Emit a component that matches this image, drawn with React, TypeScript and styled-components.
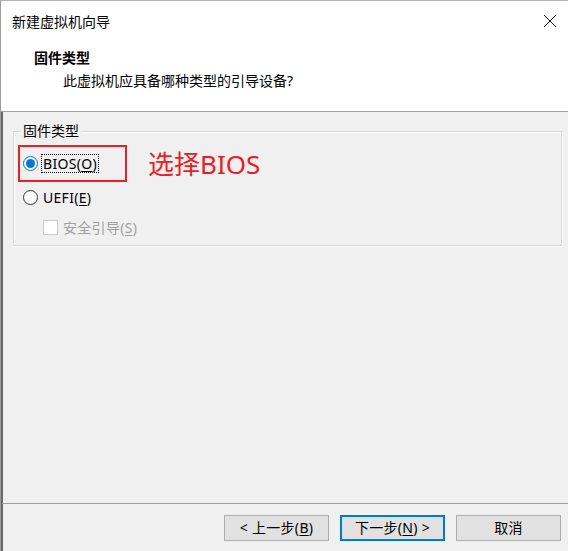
import React from "react";
import styled, { createGlobalStyle } from "styled-components";

const Global = createGlobalStyle`
  html, body { margin: 0; padding: 0; background: #f0f0f0; }
  body { font-family: "Noto Sans", "Noto Sans CJK SC", sans-serif; }
`;

const FONT = `"Noto Sans", "Noto Sans CJK SC", sans-serif`;

const Window = styled.div`
  width: 568px;
  height: 551px;
  box-sizing: border-box;
  display: flex;
  flex-direction: column;
  border-left: 1px solid #9c9c9c;
  border-top: 1px solid #b4b4b4;
  font-family: ${FONT};
  font-size: 14px;
  color: #000;
  background: #f0f0f0;
  overflow: hidden;
`;

const Header = styled.div`
  height: 110px;
  background: #fff;
  border-bottom: 1px solid #a0a0a0;
  display: flex;
  flex-direction: column;
  flex-shrink: 0;
`;

const TitleBar = styled.div`
  height: 38px;
  display: flex;
  align-items: center;
  justify-content: space-between;
  padding: 0 11px 0 11px;
  box-sizing: border-box;
`;

const TitleText = styled.span`
  font-size: 14px;
  line-height: 20px;
  margin-top: 4px;
`;

const CloseBtn = styled.span`
  display: flex;
  width: 14px;
  height: 14px;
  margin-top: 2px;
`;

const HeadTitle = styled.div`
  font-weight: bold;
  font-size: 14px;
  line-height: 20px;
  padding-left: 33px;
  margin-top: 9px;
`;

const HeadSub = styled.div`
  font-size: 14px;
  line-height: 20px;
  padding-left: 62px;
  margin-top: 3px;
`;

const Body = styled.div`
  flex: 1;
  border-left: 2px solid #6a6a6a;
  padding: 19px 6px 0 10px;
  box-sizing: border-box;
`;

const GroupBox = styled.div`
  position: relative;
  border: 1px solid #d9d9d9;
  box-shadow: inset 1px 1px 0 #fff, 1px 1px 0 #fff;
  padding: 13px 0 8px 4px;
`;

const Legend = styled.span`
  position: absolute;
  top: -11px;
  left: 7px;
  padding: 0 2px;
  background: #f0f0f0;
  line-height: 20px;
`;

const AnnotRow = styled.div`
  display: flex;
  align-items: center;
`;

const AnnotBox = styled.div`
  width: 109px;
  height: 37px;
  box-sizing: border-box;
  border: 2px solid #e8202a;
  display: flex;
  align-items: center;
  padding-left: 3px;
`;

const AnnotText = styled.span`
  font-size: 26px;
  line-height: 34px;
  color: #ec1c24;
  margin-left: 21px;
  margin-top: 1px;
`;

const OptionRow = styled.div<{ $indent?: number }>`
  display: flex;
  align-items: center;
  height: 20px;
  margin-top: ${(p) => (p.$indent ? 10 : 5)}px;
  padding-left: ${(p) => 5 + (p.$indent || 0)}px;
`;

const Radio = styled.span<{ $checked?: boolean }>`
  width: 15px;
  height: 15px;
  box-sizing: border-box;
  border-radius: 50%;
  border: 1px solid ${(p) => (p.$checked ? "#0078d7" : "#333")};
  background: #fff;
  display: flex;
  align-items: center;
  justify-content: center;
  flex-shrink: 0;
  &::after {
    content: "";
    display: ${(p) => (p.$checked ? "block" : "none")};
    width: 9px;
    height: 9px;
    border-radius: 50%;
    background: #0078d7;
  }
`;

const Checkbox = styled.span`
  width: 15px;
  height: 15px;
  box-sizing: border-box;
  border: 1px solid #cccccc;
  background: #fff;
  flex-shrink: 0;
`;

const Label = styled.span<{ $disabled?: boolean; $focus?: boolean }>`
  margin-left: ${(p) => (p.$focus ? 4 : 5)}px;
  line-height: 17px;
  letter-spacing: 0.3px;
  color: ${(p) => (p.$disabled ? "#a0a0a0" : "#000")};
  outline: ${(p) => (p.$focus ? "1px dotted #000" : "none")};
  padding: 0 ${(p) => (p.$focus ? 1 : 0)}px;
`;

const U = styled.span`
  text-decoration: underline;
  text-underline-offset: 2px;
`;

const Footer = styled.div`
  height: 48px;
  border-top: 1px solid #a0a0a0;
  border-left: 2px solid #6a6a6a;
  display: flex;
  justify-content: flex-end;
  align-items: flex-start;
  gap: 11px;
  padding: 11px 7px 0 0;
  box-sizing: border-box;
  flex-shrink: 0;
`;

const Button = styled.button<{ $primary?: boolean }>`
  width: 105px;
  height: 26px;
  box-sizing: border-box;
  background: #e1e1e1;
  border: ${(p) => (p.$primary ? "2px solid #0078d7" : "1px solid #adadad")};
  font-family: ${FONT};
  font-size: 14px;
  letter-spacing: 0.3px;
  color: #000;
  padding: 0;
  display: flex;
  align-items: center;
  justify-content: center;
  line-height: 20px;
`;

export default function App() {
  return (
    <>
      <Global />
      <Window>
        <Header>
          <TitleBar>
            <TitleText>新建虚拟机向导</TitleText>
            <CloseBtn>
              <svg width="14" height="14" viewBox="0 0 14 14">
                <path d="M1 1 L13 13 M13 1 L1 13" stroke="#111" strokeWidth="1" fill="none" />
              </svg>
            </CloseBtn>
          </TitleBar>
          <HeadTitle>固件类型</HeadTitle>
          <HeadSub>此虚拟机应具备哪种类型的引导设备?</HeadSub>
        </Header>
        <Body>
          <GroupBox>
            <Legend>固件类型</Legend>
            <AnnotRow>
              <AnnotBox>
                <Radio $checked />
                <Label $focus>
                  BIOS(<U>O</U>)
                </Label>
              </AnnotBox>
              <AnnotText>选择BIOS</AnnotText>
            </AnnotRow>
            <OptionRow>
              <Radio />
              <Label>
                UEFI(<U>E</U>)
              </Label>
            </OptionRow>
            <OptionRow $indent={20}>
              <Checkbox />
              <Label $disabled>
                安全引导(<U>S</U>)
              </Label>
            </OptionRow>
          </GroupBox>
        </Body>
        <Footer>
          <Button>
            &lt; 上一步(<U>B</U>)
          </Button>
          <Button $primary>
            下一步(<U>N</U>) &gt;
          </Button>
          <Button>取消</Button>
        </Footer>
      </Window>
    </>
  );
}
